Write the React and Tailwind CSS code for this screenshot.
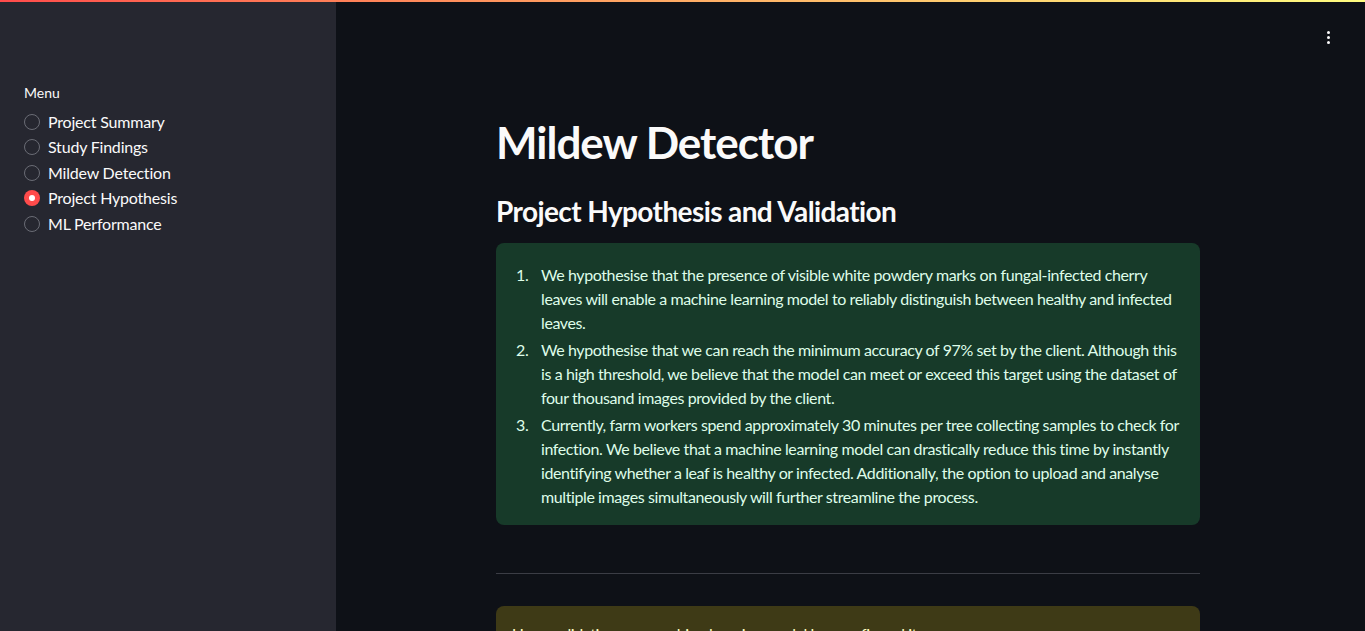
import React from "react";

const font = { fontFamily: "Lato, 'Noto Sans', sans-serif" };

function Radio({ label, checked }) {
  return (
    <div className="flex items-center h-[25.5px]">
      {checked ? (
        <span className="w-4 h-4 rounded-full bg-[#ff4b4b] flex items-center justify-center">
          <span className="w-[6px] h-[6px] rounded-full bg-white" />
        </span>
      ) : (
        <span className="w-4 h-4 rounded-full border border-[#6a6c75] box-border" />
      )}
      <span className="ml-2 text-[16px] text-[#fafafa] tracking-[-0.2px]">{label}</span>
    </div>
  );
}

const items = [
  [
    "We hypothesise that the presence of visible white powdery marks on fungal-infected cherry",
    "leaves will enable a machine learning model to reliably distinguish between healthy and infected",
    "leaves.",
  ],
  [
    "We hypothesise that we can reach the minimum accuracy of 97% set by the client. Although this",
    "is a high threshold, we believe that the model can meet or exceed this target using the dataset of",
    "four thousand images provided by the client.",
  ],
  [
    "Currently, farm workers spend approximately 30 minutes per tree collecting samples to check for",
    "infection. We believe that a machine learning model can drastically reduce this time by instantly",
    "identifying whether a leaf is healthy or infected. Additionally, the option to upload and analyse",
    "multiple images simultaneously will further streamline the process.",
  ],
];

export default function App() {
  return (
    <div className="w-[1365px] h-[631px] overflow-hidden relative bg-[#0e1117]" style={font}>
      <div className="absolute top-0 left-0 right-0 h-[2px] bg-gradient-to-r from-[#ff4b4b] to-[#fffd80] z-10" />
      <div className="flex h-full">
        <aside className="w-[336px] shrink-0 bg-[#262730] h-full pt-[85px] px-6">
          <div className="text-[14px] text-[#fafafa] h-[16px] leading-[16px]">Menu</div>
          <div className="mt-[8px] flex flex-col">
            <Radio label="Project Summary" />
            <Radio label="Study Findings" />
            <Radio label="Mildew Detection" />
            <Radio label="Project Hypothesis" checked />
            <Radio label="ML Performance" />
          </div>
        </aside>
        <main className="flex-1 relative">
          <div className="absolute right-[35px] top-[31px] flex flex-col gap-[2px]">
            <span className="w-[3px] h-[3px] rounded-full bg-[#fafafa]" />
            <span className="w-[3px] h-[3px] rounded-full bg-[#fafafa]" />
            <span className="w-[3px] h-[3px] rounded-full bg-[#fafafa]" />
          </div>
          <div className="ml-[160px] w-[704px] pt-[116px]">
            <h1 className="text-[44px] leading-[53px] font-bold text-[#fafafa] tracking-[-1px]">Mildew Detector</h1>
            <h2 className="mt-[25px] text-[28px] leading-[34px] font-bold text-[#fafafa] tracking-[-0.6px]">Project Hypothesis and Validation</h2>
            <div className="mt-[15px] rounded-lg bg-[#173a29] pt-[20px] pb-[16px] pr-4 text-[#dffde9] text-[16px] leading-[24px] tracking-[-0.4px]">
              <ol className="pl-[45px]">
                {items.map((lines, i) => (
                  <li key={i} className={"relative " + (i > 0 ? "mt-[3px]" : "")}>
                    <span className="absolute left-[-25px]">{i + 1}.</span>
                    {lines.map((l, j) => (
                      <div key={j} className="whitespace-nowrap">{l}</div>
                    ))}
                  </li>
                ))}
              </ol>
            </div>
            <div className="mt-[48px] h-px bg-[#3b3d45]" />
            <div className="mt-[32px] rounded-lg bg-[#3e3a16] pt-[16px] px-4 text-[#ffffc2] text-[16px] leading-[24px] tracking-[-0.4px]">
              Upon validation, our machine learning model has confirmed it
            </div>
          </div>
        </main>
      </div>
    </div>
  );
}
